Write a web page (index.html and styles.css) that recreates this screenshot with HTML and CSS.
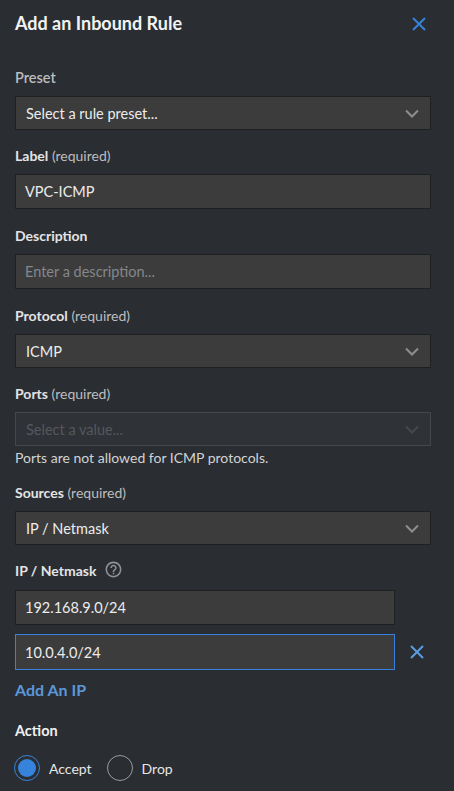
FILE: index.html
```html
<!DOCTYPE html>
<html lang="en">
<head>
<meta charset="utf-8">
<title>Add an Inbound Rule</title>
<link rel="stylesheet" href="styles.css">
</head>
<body>
<div class="drawer">
  <div class="header">
    <h1 class="title">Add an Inbound Rule</h1>
    <button class="close" aria-label="Close">
      <svg width="14" height="14" viewBox="0 0 14 14"><path d="M1 1L13 13M13 1L1 13" stroke="#3683dc" stroke-width="2" fill="none"/></svg>
    </button>
  </div>

  <div class="field field-preset">
    <div class="label label-preset">Preset</div>
    <div class="select">
      <span class="value">Select a rule preset...</span>
      <svg class="chev" width="14" height="9" viewBox="0 0 14 9"><path d="M1 1.5L7 7.5L13 1.5" stroke="#8c8e91" stroke-width="2" fill="none"/></svg>
    </div>
  </div>

  <div class="field">
    <div class="label"><b>Label</b> <span class="req">(required)</span></div>
    <div class="input"><span class="value">VPC-ICMP</span></div>
  </div>

  <div class="field after-input">
    <div class="label"><b>Description</b></div>
    <div class="input"><span class="placeholder">Enter a description...</span></div>
  </div>

  <div class="field after-input">
    <div class="label"><b>Protocol</b> <span class="req">(required)</span></div>
    <div class="select">
      <span class="value">ICMP</span>
      <svg class="chev" width="14" height="9" viewBox="0 0 14 9"><path d="M1 1.5L7 7.5L13 1.5" stroke="#8c8e91" stroke-width="2" fill="none"/></svg>
    </div>
  </div>

  <div class="field">
    <div class="label"><b>Ports</b> <span class="req">(required)</span></div>
    <div class="select disabled">
      <span class="placeholder">Select a value...</span>
      <svg class="chev" width="14" height="9" viewBox="0 0 14 9"><path d="M1 1.5L7 7.5L13 1.5" stroke="#45484c" stroke-width="2" fill="none"/></svg>
    </div>
    <div class="helper">Ports are not allowed for ICMP protocols.</div>
  </div>

  <div class="field field-sources">
    <div class="label"><b>Sources</b> <span class="req">(required)</span></div>
    <div class="select">
      <span class="value">IP / Netmask</span>
      <svg class="chev" width="14" height="9" viewBox="0 0 14 9"><path d="M1 1.5L7 7.5L13 1.5" stroke="#8c8e91" stroke-width="2" fill="none"/></svg>
    </div>
  </div>

  <div class="field">
    <div class="label label-row"><b>IP / Netmask</b>
      <svg class="help" width="19" height="19" viewBox="0 0 24 24"><path fill="#8f9194" d="M11 18h2v-2h-2v2zm1-16C6.48 2 2 6.48 2 12s4.48 10 10 10 10-4.48 10-10S17.52 2 12 2zm0 18c-4.41 0-8-3.59-8-8s3.59-8 8-8 8 3.59 8 8-3.59 8-8 8zm0-14c-2.21 0-4 1.79-4 4h2c0-1.1.9-2 2-2s2 .9 2 2c0 2-3 1.75-3 5h2c0-2.25 3-2.5 3-5 0-2.21-1.79-4-4-4z"/></svg>
    </div>
    <div class="ip-list">
      <div class="ip-row">
        <div class="input ip"><span class="value">192.168.9.0/24</span></div>
      </div>
      <div class="ip-row">
        <div class="input ip focused"><span class="value">10.0.4.0/24</span></div>
        <button class="remove" aria-label="Remove">
          <svg width="14" height="14" viewBox="0 0 14 14"><path d="M1 1L13 13M13 1L1 13" stroke="#5b9de0" stroke-width="2" fill="none"/></svg>
        </button>
      </div>
    </div>
    <a class="add-ip">Add An IP</a>
  </div>

  <div class="field field-action">
    <div class="label"><b class="action">Action</b></div>
    <div class="radios">
      <label class="radio"><span class="circle checked"><span class="dot"></span></span>Accept</label>
      <label class="radio"><span class="circle"></span>Drop</label>
    </div>
  </div>
</div>
</body>
</html>
```

FILE: styles.css
```css
* { box-sizing: border-box; }
html, body {
  margin: 0;
  padding: 0;
  background: #2a2d32;
}
body {
  font-family: Lato, "Liberation Sans", sans-serif;
  color: #e6e6e6;
  width: 454px;
  height: 791px;
  overflow: hidden;
}
.drawer {
  padding: 11px 23px 0 15px;
  display: flex;
  flex-direction: column;
}
.header {
  display: flex;
  justify-content: space-between;
  align-items: center;
  height: 24px;
}
.title {
  margin: 0;
  font-size: 18px;
  line-height: 24px;
  font-weight: 700;
  color: #f2f2f2;
}
.close, .remove {
  background: none;
  border: 0;
  padding: 0;
  width: 14px;
  height: 14px;
  display: flex;
}
.close { margin-right: 5px; margin-top: 1px; }
.field {
  margin-top: 17px;
  display: flex;
  flex-direction: column;
}
.field.after-input { margin-top: 18px; }
.field-preset { margin-top: 34px; }
.field-sources { margin-top: 17px; }
.label {
  font-size: 14px;
  line-height: 18px;
  margin-bottom: 9px;
  color: #e4e4e4;
}
.label b { font-weight: 700; }
.label .req { color: #bdbebf; font-weight: 400; }
.label-preset {
  font-size: 14.5px;
  color: #bcbdbe;
  font-weight: 600;
}
.label-row {
  display: flex;
  align-items: center;
  gap: 8px;
  height: 18px;
  margin-bottom: 10px;
}
.help { display: block; margin-top: -4px; }
.select, .input {
  height: 34px;
  background: #3c3c3d;
  border: 1px solid #1f2022;
  display: flex;
  align-items: center;
  font-size: 14.5px;
}
.input { height: 35px; padding-left: 9px; }
.select { padding: 0 11px 0 10px; justify-content: space-between; }
.value { color: #ececec; }
.placeholder { color: #85878a; }
.select.disabled {
  background: #2f3237;
  border-color: #44484d;
}
.select.disabled .placeholder { color: #55585c; }
.helper {
  font-size: 14px;
  line-height: 18px;
  margin-top: 3px;
  color: #d2d3d4;
}
.ip-list { display: flex; flex-direction: column; gap: 9px; }
.ip-row { display: flex; align-items: center; gap: 15px; }
.input.ip { width: 380px; }
.input.focused { border-color: #3683dc; height: 36px; }
.add-ip {
  margin-top: 9px;
  font-size: 16px;
  font-weight: 700;
  line-height: 22px;
  color: #5a98da;
}
.field-action { margin-top: 21px; }
.action { font-size: 14.5px; color: #f0f0f0; }
.radios { display: flex; gap: 15px; margin-top: 6px; margin-left: -1px; }
.radio {
  display: flex;
  align-items: center;
  gap: 9px;
  font-size: 14px;
  color: #e6e6e6;
}
.circle {
  width: 26px;
  height: 26px;
  border-radius: 50%;
  border: 1.5px solid #9a9b9d;
  display: flex;
  align-items: center;
  justify-content: center;
}
.circle.checked { border: 1px solid #3683dc; }
.dot {
  width: 18px;
  height: 18px;
  border-radius: 50%;
  background: #3683dc;
}
```
